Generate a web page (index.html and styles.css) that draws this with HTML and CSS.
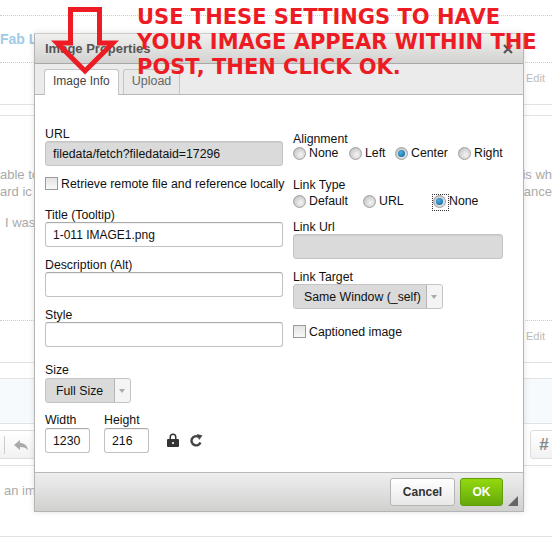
FILE: index.html
```html
<!DOCTYPE html>
<html lang="en">
<head>
    <meta charset="UTF-8">
    <title>Image Properties</title>
    <link rel="stylesheet" href="styles.css">
</head>
<body>
    <!-- forum page behind the dialog -->
    <div class="page">
        <div class="row-top"></div>
        <div class="row-author">Fab L</div>
        <div class="row-edit">Edit</div>
        <div class="row-gap"></div>
        <div class="row-post">
            <p class="post-line"><span>able to</span><span>is wh</span></p>
            <p class="post-line"><span>ard ic</span><span>rance</span></p>
            <p class="post-line post-line-last"><span>I was</span></p>
        </div>
        <div class="row-edit">Edit</div>
        <div class="row-band"></div>
        <div class="row-tools">
            <div class="tool-group">
                <svg class="reply-icon" viewBox="0 0 14 11" width="14" height="11"><path d="M0 5 6 0V3C10 3 13 5 14 10 12 8 10 7 6 7V10Z"/></svg>
            </div>
            <div class="tool-hash">#</div>
        </div>
        <div class="row-text">an im</div>
    </div>

    <div class="dialog">
        <div class="dialog-title">
            <span>Image Properties</span>
            <svg class="close-icon" viewBox="0 0 10 10" width="10" height="10"><path d="M1 1 9 9M9 1 1 9"/></svg>
        </div>
        <div class="tabs">
            <div class="tab tab-active">Image Info</div>
            <div class="tab">Upload</div>
        </div>
        <div class="dialog-body">
            <div class="col-left">
                <label class="label label-url">URL</label>
                <input class="input input-off" type="text" value="filedata/fetch?filedataid=17296">
                <div class="check-row check-remote"><span class="checkbox"></span>Retrieve remote file and reference locally</div>
                <label class="label label-title">Title (Tooltip)</label>
                <input class="input input-title" type="text" value="1-011 IMAGE1.png">
                <label class="label label-next">Description (Alt)</label>
                <input class="input" type="text">
                <label class="label label-next">Style</label>
                <input class="input" type="text">
                <label class="label label-size">Size</label>
                <div class="select select-size"><span class="select-text">Full Size</span><span class="select-arrow"></span></div>
                <div class="size-row">
                    <div>
                        <label class="label label-dim">Width</label>
                        <input class="input input-small" type="text" value="1230">
                    </div>
                    <div>
                        <label class="label label-dim">Height</label>
                        <input class="input input-small" type="text" value="216">
                    </div>
                    <svg class="lock-icon" viewBox="0 0 12 14" width="12" height="14"><path d="M1 6H2.5V4a3.500 3.500 0 0 1 7 0V6H11a1 1 0 0 1 1 1V13a1 1 0 0 1-1 1H1a1 1 0 0 1-1-1V7a1 1 0 0 1 1-1ZM4 6H8V4a2 2 0 0 0-4 0ZM6 9a1 1 0 1 0 .01 0Z" fill-rule="evenodd"/></svg>
                    <svg class="reset-icon" viewBox="0 0 13 13" width="13" height="13"><path class="reset-arc" d="M10.400 8.500A4.600 4.600 0 1 1 8.600 2.900"/><path d="M7 0 12.500 1.500 9 6Z"/></svg>
                </div>
            </div>
            <div class="col-right">
                <label class="label">Alignment</label>
                <div class="radio-row">
                    <span class="radio-item item-none"><span class="radio"></span>None</span>
                    <span class="radio-item item-left"><span class="radio"></span>Left</span>
                    <span class="radio-item item-center"><span class="radio radio-on"></span>Center</span>
                    <span class="radio-item item-last"><span class="radio"></span>Right</span>
                </div>
                <label class="label label-type">Link Type</label>
                <div class="radio-row">
                    <span class="radio-item item-default"><span class="radio"></span>Default</span>
                    <span class="radio-item item-url"><span class="radio"></span>URL</span>
                    <span class="radio-item item-last"><span class="radio radio-on radio-focus"></span>None</span>
                </div>
                <label class="label label-link">Link Url</label>
                <input class="input input-off" type="text">
                <label class="label label-target">Link Target</label>
                <div class="select select-target"><span class="select-text">Same Window (_self)</span><span class="select-arrow"></span></div>
                <div class="check-row check-caption"><span class="checkbox"></span>Captioned image</div>
            </div>
        </div>
        <div class="dialog-footer">
            <button class="btn btn-cancel">Cancel</button>
            <button class="btn btn-ok">OK</button>
            <span class="resize-corner"></span>
        </div>
    </div>

    <!-- red notes pasted over the screenshot -->
    <svg class="note-arrow" viewBox="0 0 68 70" width="68" height="70"><path d="M19.500 2.500H48.500V36H62L34 64 6 36H19.500Z"/></svg>
    <div class="note-text">USE THESE SETTINGS TO HAVE<br>YOUR IMAGE APPEAR WITHIN THE<br>POST, THEN CLICK OK.</div>
</body>
</html>
```

FILE: styles.css
```css
* {
    margin: 0;
    padding: 0;
    box-sizing: border-box;
    font-family: "Liberation Sans", Arial, sans-serif;
}

body {
    position: relative;
    width: 552px;
    height: 537px;
    overflow: hidden;
    background: #fff;
}

/* page behind */
.page {
    color: #aaa;
    font-size: 13px;
}

.row-top {
    height: 16px;
    border-bottom: 1px dotted #ccc;
}

.row-author {
    height: 47px;
    padding-top: 15px;
    color: #9fcbe8;
    font-size: 14px;
    font-weight: bold;
    border-bottom: 1px dotted #ccc;
}

.row-edit {
    height: 42px;
    padding-top: 9px;
    padding-right: 7px;
    text-align: right;
    font-size: 11px;
    color: #bbb;
    border-bottom: 1px solid #e2e2e2;
}

.row-gap {
    height: 11px;
    border-bottom: 1px solid #e2e2e2;
}

.row-post {
    height: 205px;
    padding-top: 50px;
    border-bottom: 1px dotted #ccc;
}

.post-line {
    display: flex;
    justify-content: space-between;
    height: 17px;
    line-height: 17px;
}

.post-line-last {
    margin-top: 14px;
    padding-left: 5px;
}

.row-band {
    height: 46px;
    margin-top: 15px;
    background: #f6fafc;
    border-top: 1px solid #e2e2e2;
    border-bottom: 1px solid #e2e2e2;
}

.row-tools {
    display: flex;
    justify-content: space-between;
    align-items: flex-start;
    height: 42px;
    padding-top: 6px;
    border-bottom: 1px solid #e2e2e2;
}

.tool-group {
    position: relative;
    width: 200px;
    height: 29px;
    padding: 8px 0 0 14px;
    border: 1px solid #ddd;
    border-left: 0;
    background: linear-gradient(#fff, #f2f2f2);
}

.tool-group::before {
    content: '';
    position: absolute;
    left: 4px;
    top: 5px;
    height: 18px;
    border-left: 1px solid #ccc;
}

.reply-icon {
    fill: #aaa;
}

.tool-hash {
    width: 30px;
    height: 29px;
    margin-right: -8px;
    padding-left: 8px;
    border: 1px solid #ddd;
    border-radius: 3px;
    background: linear-gradient(#fff, #f2f2f2);
    color: #888;
    font-size: 17px;
    font-weight: bold;
    font-style: italic;
    line-height: 27px;
}

.row-text {
    height: 71px;
    padding: 17px 0 0 4px;
    border-bottom: 1px solid #e2e2e2;
}

/* dialog */
.dialog {
    position: absolute;
    left: 34px;
    top: 33px;
    display: flex;
    flex-direction: column;
    width: 490px;
    height: 479px;
    background: #fff;
    border: 1px solid #b4b4b4;
    border-top-color: #ccc;
    box-shadow: 0 0 6px rgba(0, 0, 0, 0.12);
}

.dialog-title {
    display: flex;
    justify-content: space-between;
    align-items: center;
    height: 30px;
    padding: 0 10px;
    background: linear-gradient(#f0f0ee, #d2d3d0);
    border-bottom: 1px solid #a8a8a8;
    color: #555;
    font-size: 13px;
    font-weight: bold;
}

.close-icon {
    stroke: #555;
    stroke-width: 2.2;
    fill: none;
}

.tabs {
    display: flex;
    align-items: flex-end;
    gap: 4px;
    height: 31px;
    padding-left: 9px;
    background: #ebebeb;
    border-bottom: 1px solid #b8b8b8;
}

.tab {
    height: 25px;
    padding: 0 8px;
    font-size: 12.500px;
    line-height: 22px;
    color: #666;
    background: #e9e9e9;
    border: 1px solid #c4c4c4;
    border-bottom: 0;
    border-radius: 3px 3px 0 0;
}

.tab-active {
    height: 26px;
    margin-bottom: -1px;
    color: #444;
    font-size: 12px;
    background: #fff;
}

.dialog-body {
    display: flex;
    flex: 1;
    gap: 10px;
    padding-left: 10px;
    font-size: 12.300px;
    color: #111;
}

.col-left {
    width: 238px;
    padding-top: 32px;
}

.col-right {
    width: 210px;
    padding-top: 37px;
}

.label {
    display: block;
    height: 14px;
    font-size: 12.300px;
    line-height: 14px;
    white-space: nowrap;
}

.input {
    display: block;
    width: 100%;
    height: 25px;
    padding: 0 7px;
    font-size: 12.300px;
    color: #111;
    background: #fff;
    border: 1px solid #c2c2c2;
    border-top-color: #aaa;
    border-radius: 3px;
    box-shadow: inset 0 1px 1px rgba(0, 0, 0, 0.06);
}

.input-title {
    font-size: 12px;
}

.input-off {
    background: #dadada;
    border-color: #c4c4c4;
}

.label-title {
    margin-top: 17px;
}

.label-next {
    margin-top: 11px;
}

.label-size {
    margin-top: 16px;
    margin-bottom: 1px;
}

.label-dim {
    margin-bottom: 1px;
}

.label-link {
    margin-top: 12px;
}

.label-target {
    margin-top: 11px;
}

.label-type {
    margin-top: 18px;
    margin-bottom: 2px;
}

.check-row {
    display: flex;
    align-items: center;
    font-size: 12.300px;
    white-space: nowrap;
}

.check-remote {
    height: 15px;
    margin-top: 10px;
}

.check-caption {
    height: 15px;
    margin-top: 15px;
}

.checkbox {
    flex: none;
    width: 13px;
    height: 13px;
    margin-right: 3px;
    background: linear-gradient(#e4e4e4, #f8f8f8);
    border: 1px solid #9a9a9a;
}

.select {
    display: flex;
    align-items: stretch;
    height: 25px;
    background: #dadada;
    border: 1px solid #c4c4c4;
    border-radius: 3px;
}

.select-size {
    width: 86px;
}

.select-target {
    width: 150px;
}

.select-text {
    flex: 1;
    padding-left: 10px;
    font-size: 12.300px;
    line-height: 24px;
    white-space: nowrap;
}

.select-arrow {
    position: relative;
    flex: none;
    width: 16px;
    background: #f4f4f4;
    border-left: 1px solid #b5b5b5;
    border-radius: 0 2px 2px 0;
}

.select-arrow::after {
    content: '';
    position: absolute;
    left: 4px;
    top: 10px;
    border-left: 3.500px solid transparent;
    border-right: 3.500px solid transparent;
    border-top: 4px solid #aaa;
}

.size-row {
    display: flex;
    align-items: flex-end;
    margin-top: 10px;
}

.input-small {
    width: 45px;
    margin-right: 14px;
}

.lock-icon {
    margin: 0 6px 6px 4px;
    fill: #333;
}

.reset-icon {
    margin-bottom: 6px;
    margin-left: 5px;
    fill: #444;
}

.reset-arc {
    fill: none;
    stroke: #444;
    stroke-width: 2.400;
}

.radio-row {
    display: flex;
    align-items: center;
    height: 14px;
    white-space: nowrap;
}

.radio-item {
    display: flex;
    align-items: center;
    flex: none;
}

.item-none {
    width: 56px;
}

.item-left {
    width: 46px;
}

.item-center {
    width: 63px;
}

.item-default {
    width: 70px;
}

.item-url {
    width: 70px;
}

.radio {
    flex: none;
    position: relative;
    width: 13px;
    height: 13px;
    margin-right: 3px;
    border: 1px solid #a0a0a0;
    border-radius: 50%;
    background: radial-gradient(circle at 60% 60%, #f4f4f4, #d4d4d4 55%, #b0b0b0);
}

.radio-on::after {
    content: '';
    position: absolute;
    left: 2px;
    top: 2px;
    width: 7px;
    height: 7px;
    border-radius: 50%;
    background: radial-gradient(circle at 40% 35%, #4cb2e6, #0a5d94);
}

.radio-focus::before {
    content: '';
    position: absolute;
    left: -2px;
    top: -2px;
    width: 15px;
    height: 15px;
    border: 1px dotted #333;
}

.dialog-footer {
    position: relative;
    display: flex;
    justify-content: flex-end;
    align-items: center;
    gap: 5px;
    height: 39px;
    padding-right: 20px;
    background: linear-gradient(#eeeeee, #d0d1cf);
    border-top: 1px solid #b8b8b8;
}

.btn {
    height: 28px;
    font-size: 12px;
    font-weight: bold;
    border-radius: 3px;
}

.btn-cancel {
    width: 65px;
    color: #333;
    background: linear-gradient(#fff, #e8e8e8);
    border: 1px solid #b5b5b5;
}

.btn-ok {
    width: 43px;
    color: #fff;
    background: linear-gradient(#94d90e, #64a80a);
    border: 1px solid #5f9e0a;
}

.resize-corner {
    position: absolute;
    right: 5px;
    bottom: 5px;
    border-left: 10px solid transparent;
    border-bottom: 10px solid #666;
}

/* pasted notes */
.note-arrow {
    position: absolute;
    left: 51px;
    top: 7px;
    fill: none;
    stroke: #ed1c24;
    stroke-width: 5;
}

.note-text {
    position: absolute;
    left: 137px;
    top: 5px;
    color: #ed1c24;
    font-family: "DejaVu Sans", sans-serif;
    font-size: 21px;
    font-weight: bold;
    line-height: 25px;
    white-space: nowrap;
}
```
